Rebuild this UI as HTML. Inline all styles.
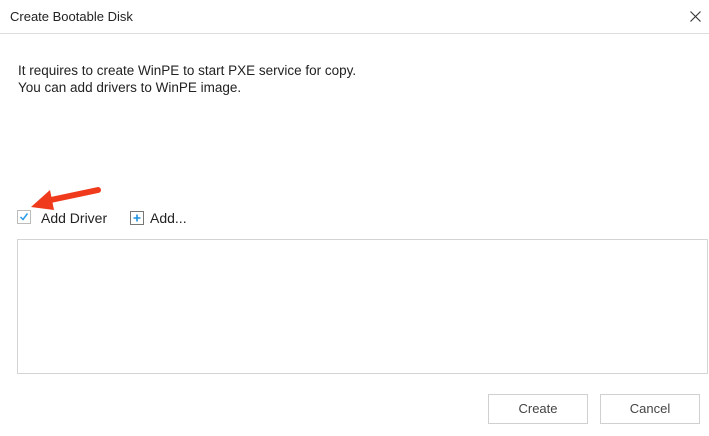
<!DOCTYPE html>
<html><head><style>
body{margin:0;width:709px;height:436px;background:#fff;font-family:"Liberation Sans",sans-serif;color:#222;position:relative;overflow:hidden}
.a{position:absolute;font-size:13px;line-height:16px;white-space:nowrap}
</style></head><body>
<div class="a" style="left:10px;top:9px;">Create Bootable Disk</div>
<svg style="position:absolute;left:690px;top:11px" width="11" height="11"><path d="M0.5 0.5L10.5 10.5M10.5 0.5L0.5 10.5" stroke="#333" stroke-width="1.1"/></svg>
<div style="position:absolute;left:0;top:33px;width:709px;height:1px;background:#ddd"></div>
<div class="a" style="left:18px;top:63px;font-size:13.5px;">It requires to create WinPE to start PXE service for copy.</div>
<div class="a" style="left:18px;top:80px;font-size:13.5px;">You can add drivers to WinPE image.</div>
<div style="position:absolute;left:17px;top:210px;width:14px;height:14px;border:1px solid #bbb;box-sizing:border-box"></div>
<svg style="position:absolute;left:19px;top:212px" width="10" height="10"><path d="M1.5 5L4 7.5L8.5 1.5" stroke="#2a9be8" stroke-width="1.5" fill="none"/></svg>
<div class="a" style="left:41px;top:210px;font-size:14px;">Add Driver</div>
<div style="position:absolute;left:130px;top:211px;width:14px;height:14px;border:1px solid #777;box-sizing:border-box"></div>
<svg style="position:absolute;left:130px;top:211px" width="14" height="14"><path d="M7 3.5V10.5M3.5 7H10.5" stroke="#1e90e0" stroke-width="1.6"/></svg>
<div class="a" style="left:150px;top:210px;font-size:14px;">Add...</div>
<svg style="position:absolute;left:0;top:180px" width="110" height="40"><path d="M98 10L46 21" stroke="#f03a1c" stroke-width="6" stroke-linecap="round"/><path d="M31 27L50 10L54 30Z" fill="#f03a1c"/></svg>
<div style="position:absolute;left:17px;top:239px;width:691px;height:135px;border:1px solid #d4d4d4;box-sizing:border-box"></div>
<div class="a" style="left:488px;top:394px;width:100px;height:30px;border:1px solid #d0d0d0;box-sizing:border-box;text-align:center;line-height:28px;color:#444">Create</div>
<div class="a" style="left:600px;top:394px;width:100px;height:30px;border:1px solid #d0d0d0;box-sizing:border-box;text-align:center;line-height:28px;color:#444">Cancel</div>
</body></html>
